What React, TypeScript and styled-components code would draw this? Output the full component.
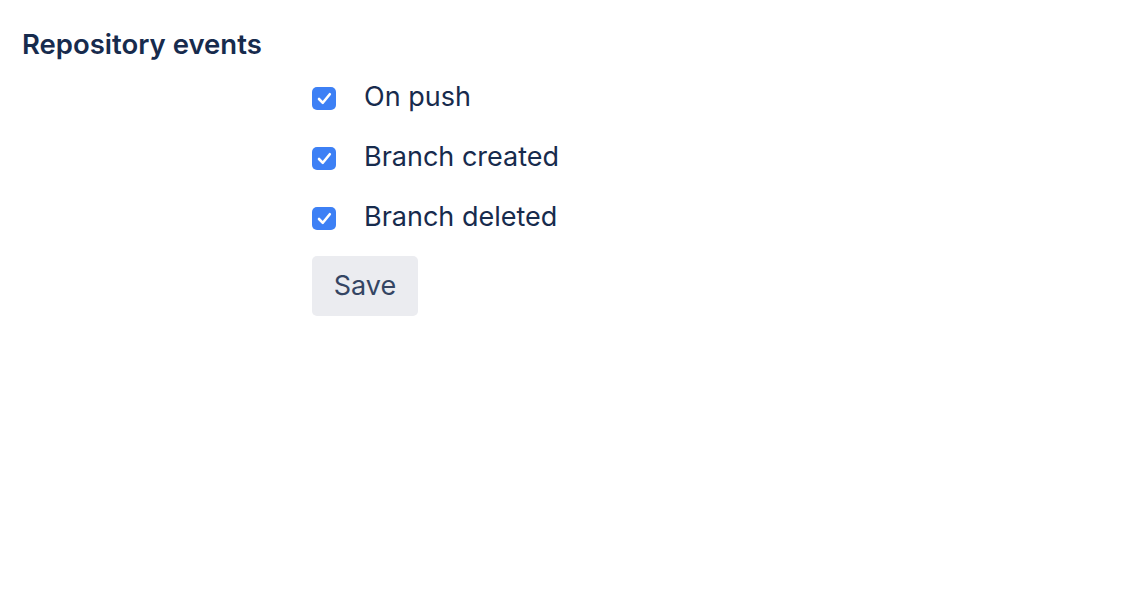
import React from 'react'
import styled, { createGlobalStyle } from 'styled-components'

const GlobalStyle = createGlobalStyle`
  body {
    margin: 0;
    background: #ffffff;
    font-family: Inter, "Noto Sans", "Liberation Sans", sans-serif;
    color: #172b4d;
  }
`

const Page = styled.div`
  padding: 27px 22px;
`

const Heading = styled.h2`
  margin: 0;
  font-size: 27.5px;
  line-height: 34px;
  font-weight: 600;
  color: #172b4d;
`

const Form = styled.form`
  margin: 7px 0 0 290px;
  display: flex;
  flex-direction: column;
  align-items: flex-start;
`

const Row = styled.label`
  display: flex;
  align-items: center;
  gap: 28px;
  height: 60px;
  font-size: 27px;
  color: #172b4d;
  cursor: pointer;
`

const Text = styled.span`
  margin-top: -3px;
`

const Box = styled.span<{ $checked: boolean }>`
  width: 24px;
  height: 23px;
  border-radius: 5px;
  background: ${({ $checked }) => ($checked ? '#3d80f5' : '#fafbfc')};
  border: ${({ $checked }) => ($checked ? 'none' : '2px solid #dfe1e6')};
  display: flex;
  align-items: center;
  justify-content: center;
`

const SaveButton = styled.button`
  margin-top: 8px;
  width: 106px;
  height: 60px;
  padding: 0 0 1px;
  border: none;
  border-radius: 5px;
  background: #ebecf0;
  color: #344563;
  font-family: inherit;
  font-size: 27px;
  cursor: pointer;
`

const events = ['On push', 'Branch created', 'Branch deleted']

const Check = ({ checked }: { checked: boolean }) => (
  <Box $checked={checked}>
    {checked && (
      <svg width="15" height="13" viewBox="0 0 15 13">
        <path d="M2 7 L5.8 10.8 L12.8 2.2" fill="none" stroke="#fff" strokeWidth="2.6" strokeLinecap="round" strokeLinejoin="round" />
      </svg>
    )}
  </Box>
)

const App = () => {
  return (
    <Page>
      <GlobalStyle />
      <Heading>Repository events</Heading>
      <Form onSubmit={(e) => e.preventDefault()}>
        {events.map((name) => (
          <Row key={name}>
            <Check checked />
            <Text>{name}</Text>
          </Row>
        ))}
        <SaveButton type="submit">Save</SaveButton>
      </Form>
    </Page>
  )
}

export default App
